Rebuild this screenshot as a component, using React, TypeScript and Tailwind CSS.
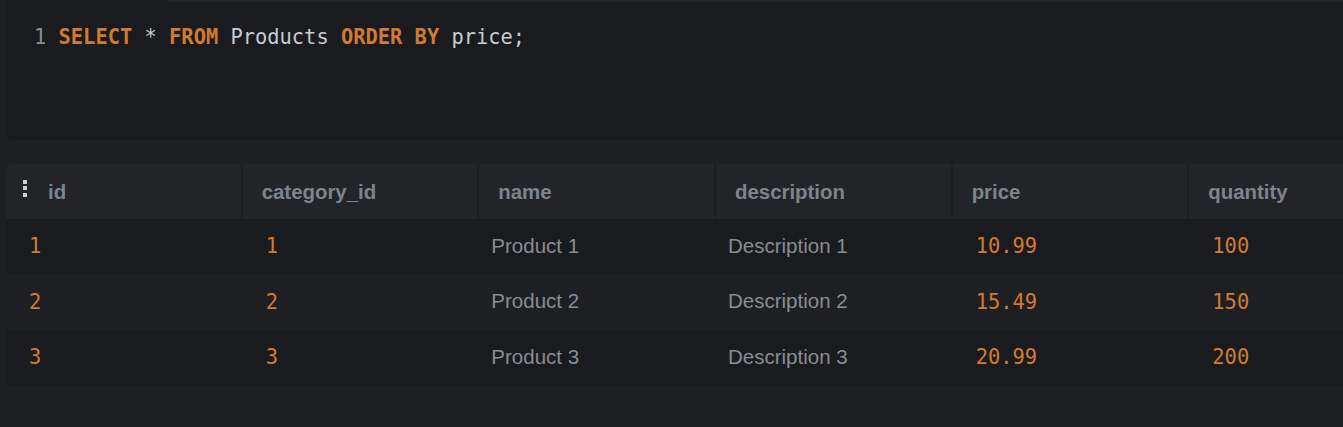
const columns = ["id", "category_id", "name", "description", "price", "quantity"]

const rows = [
    { id: "1", category_id: "1", name: "Product 1", description: "Description 1", price: "10.99", quantity: "100" },
    { id: "2", category_id: "2", name: "Product 2", description: "Description 2", price: "15.49", quantity: "150" },
    { id: "3", category_id: "3", name: "Product 3", description: "Description 3", price: "20.99", quantity: "200" },
]

const numeric = ["id", "category_id", "price", "quantity"]

function DotsIcon() {
    return (
        <div className="flex flex-col gap-[2.5px] -mt-[8px]">
            <span className="block w-[4px] h-[4px] bg-[#cfd0d2]" />
            <span className="block w-[4px] h-[4px] bg-[#cfd0d2]" />
            <span className="block w-[4px] h-[4px] bg-[#cfd0d2]" />
        </div>
    )
}

export default function App() {
    return (
        <div className="w-[1343px] h-[427px] bg-[#1e1f23] overflow-hidden font-['Liberation_Sans',Arial,sans-serif]">
            {/* editor */}
            <div className="ml-[6px] h-[140px] bg-[#1a1b1f] rounded-bl-lg flex flex-col">
                <div className="flex h-[2px]">
                    <div className="w-[162px]" />
                    <div className="flex-1 bg-[#26272b]" />
                </div>
                <div className="pl-[28px] pt-[23px] leading-[24px] text-[20.4px] font-['DejaVu_Sans_Mono',monospace] whitespace-pre">
                    <span className="text-[#8a8c90]">1 </span>
                    <span className="text-[#d17b32] font-bold">SELECT</span>
                    <span className="text-[#c8cbcf]"> * </span>
                    <span className="text-[#d17b32] font-bold">FROM</span>
                    <span className="text-[#c8cbcf]"> Products </span>
                    <span className="text-[#d17b32] font-bold">ORDER BY</span>
                    <span className="text-[#c8cbcf]"> price;</span>
                </div>
            </div>

            {/* result table */}
            <div className="mt-[24px] ml-[6px] w-[1420px]">
                <div className="grid grid-cols-6 h-[55px] bg-[#232428] rounded-tl-lg">
                    {columns.map((col, i) => (
                        <div
                            key={col}
                            className={`flex items-center pt-[1px] border-r-2 border-[#1d1e22] text-[20.4px] font-bold text-[#7f838a] ${i === 0 ? "pl-[17px]" : "pl-[19px]"}`}
                        >
                            {i === 0 && <DotsIcon />}
                            <span className={i === 0 ? "ml-[21px]" : ""}>{col}</span>
                        </div>
                    ))}
                </div>
                {rows.map((row, r) => (
                    <div
                        key={r}
                        className={`grid grid-cols-6 h-[55.4px] ${r % 2 === 0 ? "bg-[#1a1b1f]" : "bg-[#1e1f23]"}`}
                    >
                        {columns.map((col) => (
                            <div key={col} className="flex items-center">
                                {numeric.includes(col) ? (
                                    <span className="pl-[23px] text-[20.4px] text-[#d17b32] font-['DejaVu_Sans_Mono',monospace]">
                                        {row[col as keyof typeof row]}
                                    </span>
                                ) : (
                                    <span className="pl-[12px] -mt-[1px] text-[20.5px] text-[#898c91]">
                                        {row[col as keyof typeof row]}
                                    </span>
                                )}
                            </div>
                        ))}
                    </div>
                ))}
            </div>
        </div>
    )
}
